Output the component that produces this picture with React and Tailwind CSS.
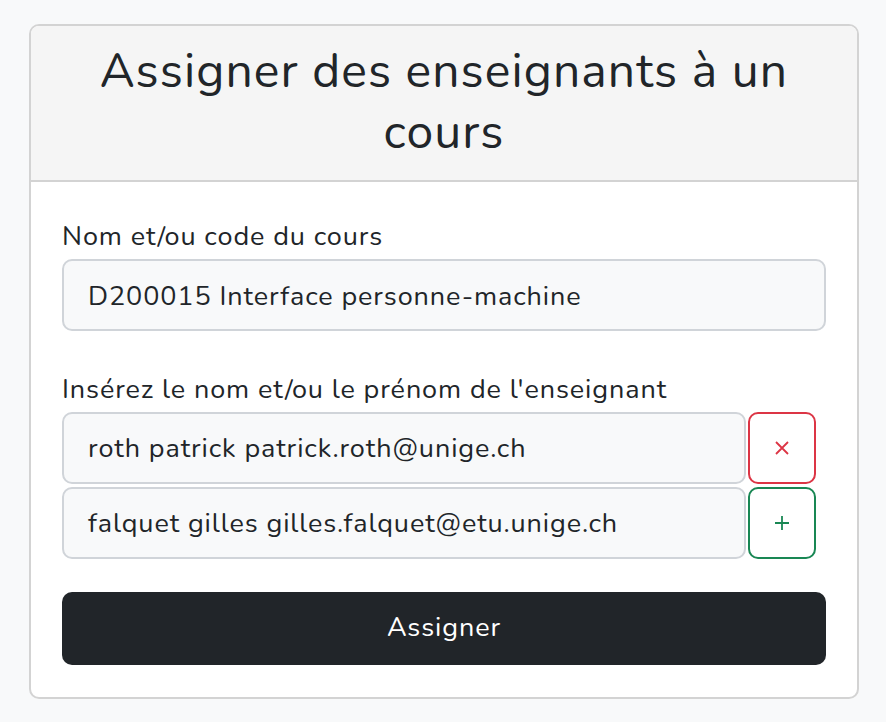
export default function App() {
  const font = { fontFamily: '"Nunito", "Noto Sans", sans-serif' };
  return (
    <div className="min-h-[722px] w-[886px] bg-[#f8f9fa] pt-[24px] px-[29px] text-[#212529]" style={font}>
      <div className="w-[830px] rounded-[10px] border-2 border-[#d3d3d3] bg-white overflow-hidden">
        <div className="bg-[#f5f5f5] border-b-2 border-[#d3d3d3] h-[156px] flex items-center justify-center px-[30px] pb-[2px]">
          <h1 className="text-center text-[48px] leading-[61px] font-normal tracking-[1.1px]">Assigner des enseignants à un cours</h1>
        </div>
        <div className="px-[31px] pt-[37px] pb-[32px] tracking-[0.9px]">
          <label className="block text-[27px] leading-[36px] mb-[4px]">Nom et/ou code du cours</label>
          <div className="h-[72px] rounded-[10px] border-2 border-[#d0d4d9] bg-[#f8f9fa] flex items-center px-[24px] pt-[4px] text-[27px]">
            D200015 Interface personne-machine
          </div>
          <label className="block text-[27px] leading-[36px] mt-[41px] mb-[4px]">Insérez le nom et/ou le prénom de l'enseignant</label>
          <div className="flex flex-col gap-[3px]">
            <div className="flex items-center gap-[2px]">
              <div className="w-[684px] h-[72px] rounded-[10px] border-2 border-[#d0d4d9] bg-[#f8f9fa] flex items-center px-[24px] pt-[2px] text-[27px]">
                roth patrick patrick.roth@unige.ch
              </div>
              <div className="w-[68px] h-[72px] rounded-[10px] border-2 border-[#dc3545] text-[#dc3545] flex items-center justify-center">
                <svg width="16" height="16" viewBox="0 0 16 16" fill="none" stroke="currentColor" strokeWidth="1.8"><path d="M2 2L14 14M14 2L2 14" /></svg>
              </div>
            </div>
            <div className="flex items-center gap-[2px]">
              <div className="w-[684px] h-[72px] rounded-[10px] border-2 border-[#d0d4d9] bg-[#f8f9fa] flex items-center px-[24px] pt-[2px] text-[27px]">
                falquet gilles gilles.falquet@etu.unige.ch
              </div>
              <div className="w-[68px] h-[72px] rounded-[10px] border-2 border-[#198754] text-[#198754] flex items-center justify-center">
                <svg width="16" height="16" viewBox="0 0 16 16" fill="none" stroke="currentColor" strokeWidth="1.8"><path d="M8 1V15M1 8H15" /></svg>
              </div>
            </div>
          </div>
          <button className="mt-[33px] w-full h-[73px] rounded-[10px] bg-[#212529] text-white text-[27px] tracking-[0.9px]">Assigner</button>
        </div>
      </div>
    </div>
  );
}
